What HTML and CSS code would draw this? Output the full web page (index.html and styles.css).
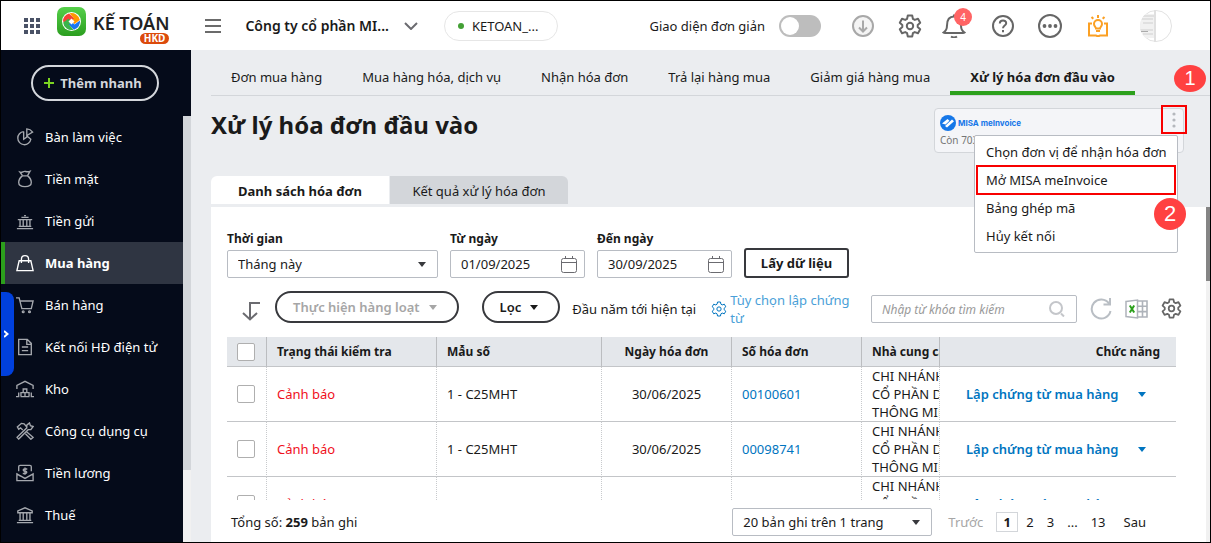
FILE: index.html
```html
<!DOCTYPE html>
<html lang="vi">
<head>
    <meta charset="UTF-8">
    <meta name="viewport" content="width=device-width, initial-scale=1.0">
    <title>Xử lý hóa đơn đầu vào</title>
    <link rel="stylesheet" href="styles.css">
</head>

<body>

    <svg class="sprite" aria-hidden="true">
        <symbol id="gear" viewBox="0 0 24 24">
            <path d="M9.1 4.8 9.8 1.5H14.2L14.9 4.8 16.8 5.9 20 4.8 22.2 8.7 19.7 10.9V13.1L22.2 15.3 20 19.2 16.8 18.1 14.9 19.2 14.2 22.5H9.8L9.1 19.2 7.2 18.1 4 19.2 1.8 15.3 4.3 13.1V10.9L1.8 8.7 4 4.8 7.2 5.9Z"/>
            <circle cx="12" cy="12" r="3.2"/>
        </symbol>
        <symbol id="calendar" viewBox="0 0 16 17">
            <path d="M2.5 2.5h11a2 2 0 0 1 2 2v10a2 2 0 0 1-2 2h-11a2 2 0 0 1-2-2v-10a2 2 0 0 1 2-2zM.5 6.5h15M4.5 0v3M11.5 0v3"/>
        </symbol>
    </svg>

    <header class="topbar">
        <button class="icon-btn apps" aria-label="Ứng dụng">
            <svg width="16" height="16" viewBox="0 0 16 16" fill="#4a5266">
                <path d="M0 0h4v4H0zM6 0h4v4H6zM12 0h4v4h-4zM0 6h4v4H0zM6 6h4v4H6zM12 6h4v4h-4zM0 12h4v4H0zM6 12h4v4H6zM12 12h4v4h-4z"/>
            </svg>
        </button>
        <a href="#" class="logo">
            <svg width="29" height="29" viewBox="0 0 29 29">
                <defs>
                    <linearGradient id="logoBg" x1="0" y1="0" x2="0" y2="1">
                        <stop offset="0" stop-color="#56d04a"/>
                        <stop offset="1" stop-color="#2b9e1f"/>
                    </linearGradient>
                </defs>
                <rect width="29" height="29" rx="7" fill="url(#logoBg)"/>
                <circle cx="14.500" cy="14.500" r="9.500" fill="#fff"/>
                <path d="M6 14.500A8.500 8.500 0 0 1 12 6.400L17.500 11.500 14.500 14.500 11.500 17.500Z" fill="#f44336"/>
                <path d="M12.500 6.200A8.500 8.500 0 0 1 22.800 13L17.500 17 14.500 14.500 17 11.500Z" fill="#ff9800"/>
                <path d="M23 13.500A8.500 8.500 0 0 1 17 22.700L11.500 17.500 14.500 14.500 17.500 17.500Z" fill="#1976f2"/>
                <path d="M16.500 22.800A8.500 8.500 0 0 1 6.100 15.500L11.500 11.800 14.500 14.500 12 17.500Z" fill="#3cb44a"/>
                <path d="M14.500 11.500l3 3-3 3-3-3z" fill="#fff"/>
            </svg>
            <span class="logo-name">KẾ TOÁN<span class="logo-tag">HKD</span></span>
        </a>
        <button class="icon-btn hamburger" aria-label="Menu">
            <svg width="16" height="14" viewBox="0 0 16 14" fill="#6b6b6b">
                <path d="M0 0h16v2H0zM0 6h16v2H0zM0 12h16v2H0z"/>
            </svg>
        </button>
        <button class="company">
            <span>Công ty cổ phần MI...</span>
            <svg width="14" height="8" viewBox="0 0 14 8" fill="none" stroke="#6b6b70" stroke-width="2"><path d="M1 1l6 6 6-6"/></svg>
        </button>
        <button class="database"><span class="dot"></span>KETOAN_...</button>

        <div class="topbar-right">
            <label class="simple-switch">
                Giao diện đơn giản
                <input type="checkbox" class="switch">
            </label>
            <button class="icon-btn" aria-label="Tải xuống">
                <svg width="22" height="22" viewBox="0 0 22 22" fill="#f4f4f4" stroke="#a8a8a8" stroke-width="2">
                    <circle cx="11" cy="11" r="10"/>
                    <path d="M11 5.500v11M7 12.500l4 4 4-4" fill="none"/>
                </svg>
            </button>
            <button class="icon-btn" aria-label="Thiết lập">
                <svg class="line" width="24" height="24"><use href="#gear"/></svg>
            </button>
            <button class="icon-btn bell" aria-label="Thông báo">
                <svg width="24" height="24" viewBox="0 0 24 24" fill="none" stroke="#666" stroke-width="2">
                    <path d="M1.500 18.500c2.500-1.500 3.500-3.500 3.500-7C5 6 7.500 2.500 12 2.500s7 3.500 7 9c0 3.500 1 5.500 3.500 7-.5.500-1 .5-1.500.5H3c-.5 0-1 0-1.500-.5zM12 .5v2"/>
                    <path d="M9 22.500c1.500 1 4.500 1 6 0"/>
                </svg>
                <span class="count">4</span>
            </button>
            <button class="icon-btn help" aria-label="Trợ giúp">
                <svg width="22" height="22" viewBox="0 0 22 22" fill="none" stroke="#666" stroke-width="2">
                    <circle cx="11" cy="11" r="10"/>
                    <path d="M7.800 8.500c0-4 6.400-4 6.400-.3 0 2.400-3.200 2.300-3.200 5M11 15v2.200"/>
                </svg>
            </button>
            <button class="icon-btn more" aria-label="Khác">
                <svg width="24" height="24" viewBox="0 0 24 24" fill="#666">
                    <circle cx="12" cy="12" r="11" fill="none" stroke="#666" stroke-width="2"/>
                    <circle cx="6.500" cy="12" r="1.900"/><circle cx="12" cy="12" r="1.900"/><circle cx="17.500" cy="12" r="1.900"/>
                </svg>
            </button>
            <button class="icon-btn guide" aria-label="Hướng dẫn">
                <svg width="22" height="22" viewBox="0 0 22 22" fill="none" stroke="#fba024" stroke-width="2">
                    <path d="M5 8.500H2v12h7l2 1 2-1h7v-12h-3"/>
                    <path d="M9 13.500c0-1.500-2-2-2-4.500a4 4 0 0 1 8 0c0 2.500-2 3-2 4.500zM9 16h4M11 0v3M4.500 2l1.800 1.800M17.500 2l-1.800 1.800"/>
                </svg>
            </button>
            <button class="icon-btn avatar" aria-label="Tài khoản">
                <svg width="32" height="32" viewBox="0 0 32 32">
                    <defs><clipPath id="round"><circle cx="16" cy="16" r="16"/></clipPath></defs>
                    <circle cx="16" cy="16" r="15.500" fill="#fff" stroke="#e2e2e2"/>
                    <g clip-path="url(#round)">
                        <path d="M0 4h14v24H0z" fill="#f1f1f1"/>
                        <path d="M14 0h2v32h-2z" fill="#e0e0e0"/>
                        <path d="M3 6h11M2 9h11M3 13h10M0 20h13M3 24h10" stroke="#cfcfcf"/>
                        <path d="M1 21.500h7" stroke="#aaa"/>
                    </g>
                </svg>
            </button>
        </div>
    </header>

    <div class="layout">
        <aside class="sidebar">
            <div class="quick"><button class="quick-add"><svg width="10" height="10" viewBox="0 0 10 10" stroke="#7bd321" stroke-width="2"><path d="M5 0v10M0 5h10"/></svg>Thêm nhanh</button></div>
            <div class="menu-wrap">
                <nav class="menu">
                    <a href="#"><svg viewBox="0 0 20 20"><path d="M8.500 4a7.300 7.300 0 1 0 8 8.500L13.500 10M8.500 4v8.500L13.500 9M12 1v7.500l6.500-4C17 2.500 15 1.200 12 1z"/></svg>Bàn làm việc</a>
                    <a href="#"><svg viewBox="0 0 20 20"><path d="M7 6.500C4.500 8.500 3 11 3 14c0 3 2 4.500 7 4.500s7-1.500 7-4.500c0-3-1.500-5.500-4-7.500zM6.500 6.500h7M7 6 4.500 2.500C7 3.500 8 1 10 1.500c2 .5 3 1 5.500 0L13 6"/></svg>Tiền mặt</a>
                    <a href="#"><svg viewBox="0 0 20 20"><path d="M1 18.500h18M3 16h14M4.500 9v7M8 9v7M12 9v7M15.500 9v7M2 8.500h16M6 6h8M9 4h2"/></svg>Tiền gửi</a>
                    <a href="#" class="active"><svg viewBox="0 0 20 20"><path d="M3.500 7.500h13L19 18.500H1zM6 10V6c0-5.500 8-5.500 8 0v4"/></svg>Mua hàng</a>
                    <a href="#"><svg viewBox="0 0 20 20"><path d="M0 2h3.500l3 12H17l2-8.500H4.500"/><circle cx="8" cy="17.500" r="1"/><circle cx="15" cy="17.500" r="1"/></svg>Bán hàng</a>
                    <a href="#"><svg viewBox="0 0 20 20"><path d="M3 1.500h9.500L17 6v12.500H3zM12 2v5h5M6.500 10h7M6.500 14h7"/></svg>Kết nối HĐ điện tử</a>
                    <a href="#"><svg viewBox="0 0 20 20"><path d="M1 10V6l9-4.500L19 6v4M0 18.500h3V14M20 18.500h-3V14M5 18.500h10M5.500 18v-4h9v4M10 14v4M8 14v-4h4v4"/></svg>Kho</a>
                    <a href="#"><svg viewBox="0 0 20 20"><path d="M3 19 1.200 17 12 6.500V3.500L15 1l1 3 3 1-2.500 3.500h-3zM7.500 9 5 6.500 3 8 1.500 5.500 6 1.500 9 2l3 3.500M12 11l7 6-2.500 2.200-6-6.200"/></svg>Công cụ dụng cụ</a>
                    <a href="#"><svg viewBox="0 0 20 20"><path d="M3 8V3c0-1 .5-1.500 1.500-1.500h11c1 0 1.500.5 1.500 1.500v5M1 11v7.500h18V11l-9 5zM1 11l4 2.500M12.500 5.500h-3c-2 0-2 2.500 0 2.500h1c2 0 2 2.500 0 2.500h-3M10 4v8"/></svg>Tiền lương</a>
                    <a href="#"><svg viewBox="0 0 20 20"><path d="M1 18.500h18M3 16h14M4.500 8v8M8 8v8M12 8v8M15.500 8v8M2 7.500h16V5.500L10 2 2 5.500z"/></svg>Thuế</a>
                </nav>
                <div class="menu-scroll"><div class="menu-thumb"></div></div>
            </div>
            <button class="side-handle" aria-label="Mở rộng">
                <svg width="5" height="8" viewBox="0 0 5 8" fill="none" stroke="#fff" stroke-width="2"><path d="M0 1l3.500 3L0 7"/></svg>
            </button>
        </aside>

        <main class="content">
            <nav class="tabs">
                <a href="#">Đơn mua hàng</a>
                <a href="#">Mua hàng hóa, dịch vụ</a>
                <a href="#">Nhận hóa đơn</a>
                <a href="#">Trả lại hàng mua</a>
                <a href="#">Giảm giá hàng mua</a>
                <a href="#" class="active">Xử lý hóa đơn đầu vào</a>
                <span class="step step-one">1</span>
            </nav>

            <div class="page-head">
                <h1>Xử lý hóa đơn đầu vào</h1>
                <div class="invoice-card">
                    <div class="invoice-brand">
                        <svg width="16" height="16" viewBox="0 0 16 16">
                            <circle cx="8" cy="8" r="8" fill="#1677e8"/>
                            <path d="M2 8.500 7.500 4l2 1.800L5.500 9.500zM5 11l7-6.500 2 1.800-7 6.200z" fill="#fff"/>
                        </svg>
                        MISA meInvoice
                    </div>
                    <div class="invoice-left">Còn 703</div>
                    <button class="kebab" aria-label="Tùy chọn">
                        <svg width="4" height="16" viewBox="0 0 4 16" fill="#b5b8bd"><circle cx="2" cy="2" r="1.600"/><circle cx="2" cy="8" r="1.600"/><circle cx="2" cy="14" r="1.600"/></svg>
                    </button>
                    <div class="dropdown">
                        <button>Chọn đơn vị để nhận hóa đơn</button>
                        <button class="marked">Mở MISA meInvoice</button>
                        <button>Bảng ghép mã</button>
                        <button>Hủy kết nối</button>
                        <span class="step step-two">2</span>
                    </div>
                </div>
            </div>

            <div class="subtabs">
                <button class="active">Danh sách hóa đơn</button>
                <button>Kết quả xử lý hóa đơn</button>
            </div>

            <div class="panel-wrap">
                <section class="panel">
                    <form class="filters">
                        <div class="field period">
                            <label for="period">Thời gian</label>
                            <div class="select"><select id="period"><option>Tháng này</option></select></div>
                        </div>
                        <div class="field date">
                            <label for="from">Từ ngày</label>
                            <div class="date-box"><input type="text" id="from" value="01/09/2025"><svg width="16" height="17"><use href="#calendar"/></svg></div>
                        </div>
                        <div class="field date">
                            <label for="to">Đến ngày</label>
                            <div class="date-box"><input type="text" id="to" value="30/09/2025"><svg width="16" height="17"><use href="#calendar"/></svg></div>
                        </div>
                        <button type="button" class="get-data">Lấy dữ liệu</button>
                    </form>

                    <div class="toolbar">
                        <svg class="down-arrow" width="18" height="19" viewBox="0 0 18 19" fill="none" stroke="#6b6b70" stroke-width="2"><path d="M18 1H8v16M1 11l7 6.500 7-6.500"/></svg>
                        <button class="pill batch" disabled>Thực hiện hàng loạt<span class="caret"></span></button>
                        <button class="pill">Lọc<span class="caret"></span></button>
                        <span class="range">Đầu năm tới hiện tại</span>
                        <a href="#" class="options">
                            <svg width="16" height="16"><use href="#gear"/></svg>
                            <span>Tùy chọn lập chứng từ</span>
                        </a>
                        <div class="search">
                            <input type="text" placeholder="Nhập từ khóa tìm kiếm" aria-label="Tìm kiếm">
                            <svg width="16" height="16" viewBox="0 0 16 16" fill="none" stroke="#c4c6ca" stroke-width="2"><circle cx="7" cy="7" r="6"/><path d="M12 12.500l3 3"/></svg>
                        </div>
                        <button class="icon-btn" aria-label="Tải lại">
                            <svg width="22" height="24" viewBox="0 0 22 24" fill="none" stroke="#b9bec4" stroke-width="2"><path d="M19 6.500A9.500 9.500 0 1 0 20.500 14M20 1v6.500h-6.500"/></svg>
                        </button>
                        <button class="icon-btn" aria-label="Xuất Excel">
                            <svg width="23" height="20" viewBox="0 0 23 20" fill="none" stroke="#aeb3ba" stroke-width="2">
                                <path d="M12.500 2H22v16h-9.500M13 7.300h9M13 12.600h9M17.500 2v16" stroke-width="1.600"/>
                                <path d="M1 2.500 12.500 1v18L1 17.500z" fill="#fff" stroke-width="1.500"/>
                                <path d="M4.800 6.500l4.400 7M9.200 6.500l-4.400 7" stroke="#2ca01c"/>
                            </svg>
                        </button>
                        <button class="icon-btn" aria-label="Tùy chỉnh">
                            <svg class="line" width="21" height="21"><use href="#gear"/></svg>
                        </button>
                    </div>

                    <div class="table-wrap">
                        <table>
                            <colgroup>
                                <col class="c-check"><col class="c-state"><col class="c-form"><col class="c-date"><col class="c-number"><col class="c-vendor"><col>
                            </colgroup>
                            <thead>
                                <tr>
                                    <th class="pick"><input type="checkbox" aria-label="Chọn tất cả"></th>
                                    <th>Trạng thái kiểm tra</th>
                                    <th>Mẫu số</th>
                                    <th class="center">Ngày hóa đơn</th>
                                    <th>Số hóa đơn</th>
                                    <th>Nhà cung cấp</th>
                                    <th class="func">Chức năng</th>
                                </tr>
                            </thead>
                            <tbody>
                                <tr>
                                    <td class="pick"><input type="checkbox" aria-label="Chọn 00100601"></td>
                                    <td class="warn">Cảnh báo</td>
                                    <td>1 - C25MHT</td>
                                    <td class="center">30/06/2025</td>
                                    <td><a href="#">00100601</a></td>
                                    <td>CHI NHÁNH<br>CỔ PHẦN DỊCH<br>THÔNG MINH</td>
                                    <td class="action"><a href="#">Lập chứng từ mua hàng</a><button class="row-caret" aria-label="Thêm"><span class="caret"></span></button></td>
                                </tr>
                                <tr>
                                    <td class="pick"><input type="checkbox" aria-label="Chọn 00098741"></td>
                                    <td class="warn">Cảnh báo</td>
                                    <td>1 - C25MHT</td>
                                    <td class="center">30/06/2025</td>
                                    <td><a href="#">00098741</a></td>
                                    <td>CHI NHÁNH<br>CỔ PHẦN DỊCH<br>THÔNG MINH</td>
                                    <td class="action"><a href="#">Lập chứng từ mua hàng</a><button class="row-caret" aria-label="Thêm"><span class="caret"></span></button></td>
                                </tr>
                                <tr>
                                    <td class="pick"><input type="checkbox" aria-label="Chọn 00098388"></td>
                                    <td class="warn">Cảnh báo</td>
                                    <td>1 - C25MHT</td>
                                    <td class="center">25/06/2025</td>
                                    <td><a href="#">00098388</a></td>
                                    <td>CHI NHÁNH<br>CỔ PHẦN DỊCH<br>THÔNG MINH</td>
                                    <td class="action"><a href="#">Lập chứng từ mua hàng</a><button class="row-caret" aria-label="Thêm"><span class="caret"></span></button></td>
                                </tr>
                            </tbody>
                        </table>
                    </div>

                    <footer class="pager">
                        <div class="total">Tổng số: <b>259</b> bản ghi</div>
                        <div class="select page-size"><select aria-label="Số bản ghi"><option>20 bản ghi trên 1 trang</option></select></div>
                        <button class="prev" disabled>Trước</button>
                        <div class="pages">
                            <button class="current">1</button>
                            <button>2</button>
                            <button>3</button>
                            <span>...</span>
                            <button>13</button>
                        </div>
                        <button>Sau</button>
                    </footer>
                </section>
                <div class="page-scroll"><div class="page-thumb"></div></div>
            </div>
        </main>
    </div>

</body>
</html>
```
FILE: styles.css
```css
* {
    box-sizing: border-box;
}

body {
    margin: 0;
    height: 100vh;
    display: flex;
    flex-direction: column;
    overflow: hidden;
    border: 1px solid #000;
    background: #ebedf0;
    color: #1a1a1a;
    font-family: "Noto Sans", sans-serif;
    font-size: 13px;
    line-height: 18px;
}

button, input, select {
    font: inherit;
    color: inherit;
}

button {
    padding: 0;
    border: none;
    background: none;
    cursor: pointer;
}

a {
    color: inherit;
    text-decoration: none;
}

svg {
    flex-shrink: 0;
}

.sprite {
    position: absolute;
    width: 0;
    height: 0;
}

.icon-btn {
    display: flex;
    position: relative;
}

.line {
    fill: none;
    stroke: #666;
    stroke-width: 2;
    stroke-linejoin: round;
}

.caret {
    display: inline-block;
    border: 4px solid transparent;
    border-top: 5px solid currentColor;
    border-bottom: 0;
}

/* Header */
.topbar {
    flex: none;
    height: 49px;
    display: flex;
    align-items: center;
    background: #fff;
    padding-left: 23px;
}

.logo {
    display: flex;
    align-items: flex-start;
    gap: 7px;
    margin-left: 17px;
    margin-bottom: 5px;
}

.logo-name {
    position: relative;
    font-size: 18px;
    font-weight: 600;
    line-height: 33px;
    color: #222;
    white-space: nowrap;
}

.logo-tag {
    position: absolute;
    right: 0;
    top: 26px;
    padding: 0 4px;
    border-radius: 6px;
    background: #dc4a0b;
    color: #fff;
    font-size: 10px;
    font-weight: 700;
    line-height: 11px;
}

.hamburger {
    margin-left: 36px;
}

.company {
    display: flex;
    align-items: center;
    gap: 15px;
    margin-left: 24px;
    font-size: 14px;
    font-weight: 600;
    white-space: nowrap;
}

.database {
    display: flex;
    align-items: center;
    gap: 8px;
    height: 30px;
    margin-left: 26px;
    padding: 0 19px 0 13px;
    border: 1px solid #e6e6e6;
    border-radius: 15px;
}

.dot {
    width: 6px;
    height: 6px;
    border-radius: 50%;
    background: #43a035;
}

.topbar-right {
    display: flex;
    align-items: center;
    gap: 24px;
    margin-left: auto;
    padding-right: 38px;
}

.simple-switch {
    display: flex;
    align-items: center;
    gap: 14px;
    margin-right: 7px;
    white-space: nowrap;
}

.switch {
    appearance: none;
    display: flex;
    width: 42px;
    height: 22px;
    margin: 0;
    padding: 2px;
    border-radius: 11px;
    background: #bdbdbd;
}

.switch::before {
    content: "";
    width: 18px;
    height: 18px;
    border-radius: 50%;
    background: #fff;
}

.bell {
    margin-left: -4px;
}

.count {
    position: absolute;
    left: 12px;
    top: -6px;
    width: 18px;
    height: 18px;
    border-radius: 50%;
    background: #ff6464;
    color: #fff;
    font-size: 10px;
    text-align: center;
}

.help {
    margin-left: 2px;
}

.guide {
    margin: 0 7px 0 1px;
}

/* Sidebar */
.layout {
    flex: 1;
    min-height: 0;
    display: flex;
}

.sidebar {
    position: relative;
    flex: none;
    width: 190px;
    display: flex;
    flex-direction: column;
    background: #050b1a;
    color: #fff;
}

.quick {
    flex: none;
    height: 66px;
    padding: 15px 30px;
}

.quick-add {
    display: flex;
    align-items: center;
    justify-content: center;
    gap: 6px;
    width: 128px;
    height: 36px;
    padding-right: 4px;
    border: 2px solid #d4d7dc;
    border-radius: 18px;
    color: #d4d7dc;
    font-weight: 700;
    white-space: nowrap;
}

.menu-wrap {
    flex: 1;
    min-height: 0;
    display: flex;
}

.menu {
    flex: 1;
    overflow: hidden;
}

.menu a {
    display: flex;
    align-items: center;
    gap: 11px;
    height: 42px;
    padding-left: 11px;
    border-left: 4px solid transparent;
}

.menu svg {
    width: 18px;
    height: 18px;
    fill: none;
    stroke: #a5a8ae;
    stroke-width: 1.5;
}

.menu .active {
    background: #2f3542;
    border-left-color: #2ca01c;
    font-weight: 700;
}

.menu .active svg {
    stroke: #fff;
}

.menu-scroll {
    width: 8px;
    background: #f1f1f1;
}

.menu-thumb {
    height: 83%;
    background: #d3d6da;
}

.side-handle {
    position: absolute;
    left: 0;
    top: 242px;
    width: 13px;
    height: 84px;
    display: flex;
    align-items: center;
    padding-left: 3px;
    border-radius: 0 8px 8px 0;
    background: #0040dd;
}

/* Content */
.content {
    flex: 1;
    min-width: 0;
    display: flex;
    flex-direction: column;
    padding-left: 20px;
}

.tabs {
    position: relative;
    flex: none;
    display: flex;
    height: 46px;
    border-bottom: 1px solid #d3d6da;
    white-space: nowrap;
}

.tabs a {
    padding: 18px 20px 0;
}

.tabs .active {
    border-bottom: 4px solid #2ca01c;
    font-weight: 700;
}

.step {
    position: absolute;
    height: 32px;
    width: 32px;
    border-radius: 50%;
    background: #ff4141;
    color: #fff;
    font-family: "Liberation Sans", sans-serif;
    font-size: 22px;
    line-height: 32px;
    text-align: center;
}

.step-one {
    right: 4px;
    top: 15px;
    height: 27px;
    line-height: 27px;
    font-size: 20px;
}

.step-two {
    right: -9px;
    top: 62px;
}

.page-head {
    flex: none;
    display: flex;
    justify-content: space-between;
    height: 80px;
    padding: 12px 26px 0 0;
}

h1 {
    margin: 0;
    font-size: 24px;
    line-height: 33px;
}

.invoice-card {
    position: relative;
    width: 250px;
    height: 45px;
    padding: 5px;
    border: 1px solid #d3d6da;
    border-radius: 4px;
    background: #f4f5f8;
}

.invoice-brand {
    display: flex;
    align-items: center;
    gap: 2px;
    height: 17px;
    color: #1677e8;
    font-family: Inter, sans-serif;
    font-size: 8px;
    font-weight: 700;
}

.invoice-left {
    color: #757575;
    font-size: 10px;
}

.kebab {
    position: absolute;
    right: -4px;
    top: -4px;
    width: 26px;
    height: 29px;
    display: flex;
    align-items: center;
    justify-content: center;
    border: 2px solid #f80000;
}

.dropdown {
    position: absolute;
    left: 39px;
    top: 26px;
    z-index: 2;
    width: 204px;
    padding: 2px;
    border: 1px solid #b8bcc3;
    border-radius: 2px;
    background: #fff;
}

.dropdown button {
    display: block;
    width: 100%;
    height: 28px;
    padding-left: 9px;
    text-align: left;
    white-space: nowrap;
}

.dropdown .marked {
    outline: 2px solid #f80000;
    outline-offset: -1px;
}

.subtabs {
    flex: none;
    display: flex;
    gap: 1px;
    height: 31px;
    padding-bottom: 3px;
}

.subtabs button {
    width: 178px;
    padding-top: 2px;
    background: #d3d6da;
    border-radius: 0 6px 0 0;
}

.subtabs .active {
    background: #fff;
    border-radius: 6px 0 0 0;
    font-weight: 700;
}

.panel-wrap {
    flex: 1;
    min-height: 0;
    display: flex;
}

.panel {
    flex: 1;
    min-width: 0;
    display: flex;
    flex-direction: column;
    padding: 23px 30px 0 16px;
    background: #fff;
}

.page-scroll {
    width: 4px;
    background: #f1f1f1;
}

.page-thumb {
    height: 22%;
    background: #858585;
}

/* Filters */
.filters {
    display: flex;
    align-items: flex-end;
    gap: 12px;
}

.field label {
    display: block;
    margin-bottom: 2px;
    font-size: 12px;
    font-weight: 700;
}

.period {
    width: 211px;
}

.date {
    width: 135px;
}

.select, .date-box, .search {
    position: relative;
    display: flex;
    align-items: center;
    height: 28px;
    border: 1px solid #b8bcc3;
    border-radius: 2px;
    background: #fff;
}

.select select {
    appearance: none;
    width: 100%;
    height: 100%;
    padding: 0 10px;
    border: none;
    background: none;
}

.select::after {
    content: "";
    position: absolute;
    right: 11px;
    border: 4px solid transparent;
    border-top: 5px solid #38393d;
    border-bottom: 0;
    pointer-events: none;
}

.date-box {
    padding-right: 7px;
    fill: none;
    stroke: #6b6b70;
}

.date-box input, .search input {
    flex: 1;
    min-width: 0;
    padding: 0 0 0 10px;
    border: none;
    background: none;
}

.get-data {
    width: 105px;
    height: 30px;
    border: 2px solid #38393d;
    border-radius: 3px;
    font-weight: 700;
}

/* Toolbar */
.toolbar {
    display: flex;
    align-items: center;
    height: 59px;
    padding: 2px 0 0 15px;
    margin-right: -6px;
    white-space: nowrap;
}

.down-arrow {
    margin-top: 6px;
}

.pill {
    height: 32px;
    margin-bottom: 4px;
    padding: 0 20px 0 16px;
    border: 2px solid #38393d;
    border-radius: 16px;
    font-weight: 600;
}

.pill .caret {
    margin-left: 9px;
    margin-bottom: 2px;
}

.batch {
    margin: 0 23px 4px 15px;
    color: #a6a6a6;
}

.range {
    margin-left: 12px;
}

.options {
    display: flex;
    align-items: center;
    gap: 3px;
    width: 142px;
    margin: 0 auto 0 15px;
    color: #4a9fd8;
    white-space: normal;
}

.options svg {
    fill: none;
    stroke: #0075c0;
    stroke-width: 1.5;
}

.search {
    width: 206px;
    padding-right: 11px;
}

.search input::placeholder {
    color: #999;
    font-size: 12px;
    font-style: italic;
}

.toolbar .icon-btn {
    margin-left: 13px;
}

/* Table */
.table-wrap {
    flex: 1;
    min-height: 0;
    overflow: hidden;
}

table {
    width: 100%;
    table-layout: fixed;
    border-collapse: separate;
    border-spacing: 0;
}

.c-check { width: 40px; }
.c-state { width: 170px; }
.c-form { width: 165px; }
.c-date { width: 130px; }
.c-number { width: 130px; }
.c-vendor { width: 78px; }

th, td {
    padding: 0 0 0 10px;
    border-bottom: 1px solid #c3c5c8;
    text-align: left;
    white-space: nowrap;
    overflow: hidden;
}

th {
    height: 30px;
    background: #e4e7eb;
    border-right: 1px solid #bbbdc0;
    font-size: 12px;
    font-weight: 700;
}

td {
    height: 55px;
    border-right: 1px dotted #c8cacd;
}

th:last-child, td:last-child {
    border-right: none;
}

.center {
    padding: 0;
    text-align: center;
}

.func {
    padding-right: 16px;
    text-align: right;
}

td a {
    color: #0075c0;
}

.warn {
    color: #f00f1c;
}

.action {
    padding-left: 26px;
    color: #0075c0;
    font-weight: 600;
}

.row-caret {
    margin-left: 20px;
}

.row-caret .caret {
    margin-bottom: 2px;
}

.pick input {
    appearance: none;
    display: block;
    width: 18px;
    height: 18px;
    margin: 0;
    border: 1px solid #afafaf;
    border-radius: 2px;
    background: #fff;
}

/* Pager */
.pager {
    flex: none;
    display: flex;
    align-items: center;
    height: 42px;
    padding: 2px 30px 0 4px;
    white-space: nowrap;
}

.page-size {
    width: 200px;
    margin-left: auto;
}

.prev {
    margin: 0 13px 0 16px;
    color: #a6a6a6;
}

.pages {
    display: flex;
    align-items: center;
    gap: 13px;
    margin-right: 18px;
}

.current {
    width: 22px;
    height: 20px;
    margin-right: -5px;
    border: 1px solid #d3d6da;
    font-weight: 700;
}
```
